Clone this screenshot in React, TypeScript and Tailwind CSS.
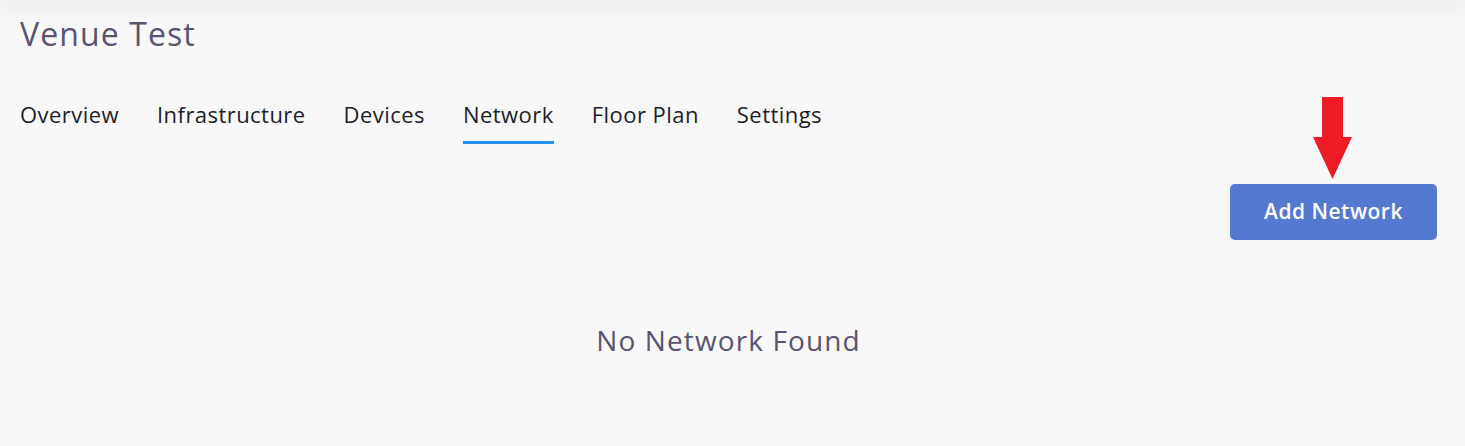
export default function App() {
  const tabs = ["Overview", "Infrastructure", "Devices", "Network", "Floor Plan", "Settings"];
  return (
    <div className="min-h-[446px] w-full bg-[#f8f8f8] overflow-hidden" style={{ fontFamily: '"Open Sans", "Noto Sans", sans-serif' }}>
      <div className="h-0 w-full shadow-[0_0_22px_8px_rgba(0,0,0,0.06)]" />
      <div className="pl-5 pr-[28px]">
        <h1 className="pt-[14px] text-[32px] leading-[40px] text-[#5a5470] tracking-[1.1px]">Venue Test</h1>
        <div className="mt-[45px] flex gap-[38px]">
          {tabs.map((t) => (
            <div key={t} className="flex flex-col">
              <span className="text-[22px] leading-[30px] text-[#1d1d2b] tracking-[0.45px]">{t}</span>
              <div className={"mt-[12px] h-[3px] " + (t === "Network" ? "bg-[#2391f5]" : "bg-transparent")} />
            </div>
          ))}
        </div>
        <div className="flex justify-end mt-[-47px]">
          <div className="flex flex-col items-center w-[207px]">
            <svg width="42" height="83" viewBox="0 0 42 83" className="ml-[-1px]">
              <path d="M10 0 H31 V40 H40 L20.5 82 L1 40 H10 Z" fill="#ed1c24" />
            </svg>
            <button className="mt-[4px] w-[207px] h-[56px] rounded-[5px] bg-[#5479d0] text-white text-[21px] font-semibold tracking-[0.5px]">Add Network</button>
          </div>
        </div>
        <div className="mt-[81px] flex justify-center">
          <span className="text-[28px] leading-[38px] text-[#5a5470] tracking-[1.1px]">No Network Found</span>
        </div>
      </div>
    </div>
  );
}
